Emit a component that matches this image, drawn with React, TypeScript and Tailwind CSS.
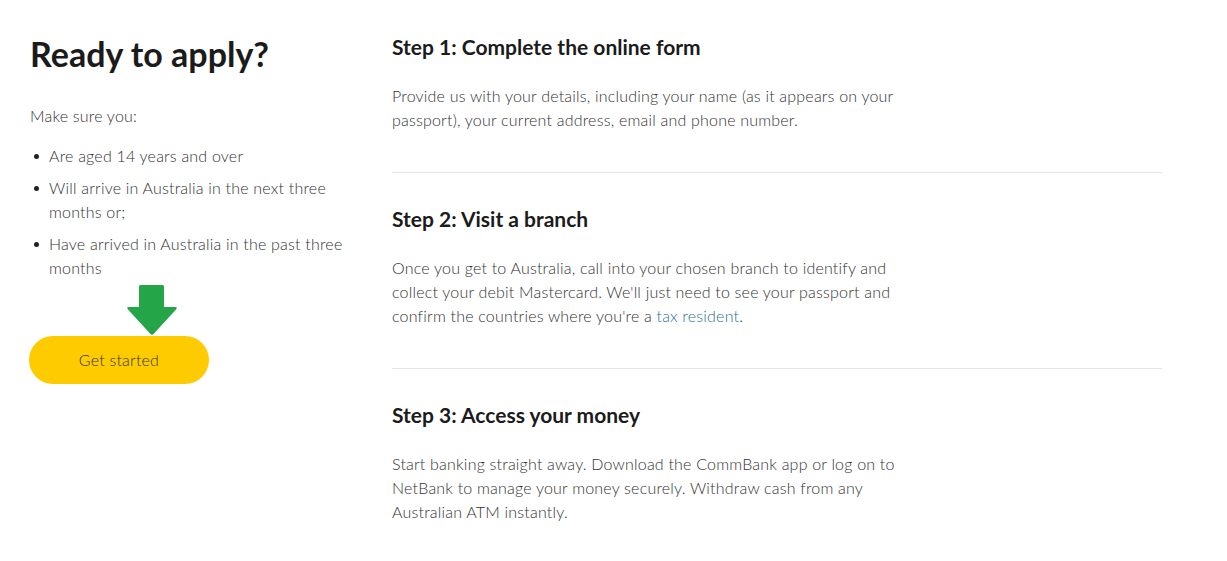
import React from "react";

const font = { fontFamily: "Lato, 'Open Sans', sans-serif" };

function Bullet({ children }: { children: React.ReactNode }) {
  return (
    <li className="flex">
      <span className="w-[19px] shrink-0 flex pt-[10px] pl-[4px]">
        <span className="block w-[5px] h-[5px] rounded-full bg-[#222]" />
      </span>
      <span>{children}</span>
    </li>
  );
}

function Step({ title, children, last }: { title: string; children: React.ReactNode; last?: boolean }) {
  return (
    <div className={last ? "" : "border-b border-[#e6e6e6] pb-[40px] mb-[32px]"}>
      <h3 className="text-[21px] leading-[28px] font-bold text-[#1b1b1b]">{title}</h3>
      <p className="mt-[23px] max-w-[515px] text-[16px] leading-[24px] font-light tracking-[0.2px] text-[#333]">{children}</p>
    </div>
  );
}

export default function App() {
  return (
    <div className="w-[1227px] h-[561px] bg-white overflow-hidden" style={font}>
      <div className="flex pl-[30px] pt-[33px]">
        <div className="w-[362px] shrink-0 pr-[20px]">
          <h2 className="text-[34px] leading-[42px] font-bold text-[#1b1b1b]">Ready to apply?</h2>
          <p className="mt-[29px] text-[16px] leading-[24px] font-light tracking-[0.2px] text-[#333]">Make sure you:</p>
          <ul className="mt-[16px] flex flex-col gap-[8px] text-[16px] leading-[24px] font-light tracking-[0.2px] text-[#333]">
            <Bullet>Are aged 14 years and over</Bullet>
            <Bullet>Will arrive in Australia in the next three months or;</Bullet>
            <Bullet>Have arrived in Australia in the past three months</Bullet>
          </ul>
          <div className="mt-[5px] ml-[96px] h-[51px] w-[52px]">
            <svg width="52" height="51" viewBox="0 0 52 51">
              <path
                d="M13 1.5 Q13 0 14.5 0 H36.5 Q38 0 38 1.5 V22 H49 Q52 22 50 24.5 L27.5 49 Q26 50.5 24.5 49 L2 24.5 Q0 22 3 22 H13 Z"
                fill="#23a548"
              />
            </svg>
          </div>
          <button className="-ml-[1px] w-[180px] h-[48px] rounded-full bg-[#fdcb00] text-[#3a3300] text-[16px] font-light tracking-[0.2px]">
            Get started
          </button>
        </div>
        <div className="w-[770px]">
          <Step title="Step 1: Complete the online form">
            Provide us with your details, including your name (as it appears on your passport), your current address, email and phone number.
          </Step>
          <Step title="Step 2: Visit a branch">
            Once you get to Australia, call into your chosen branch to identify and collect your debit Mastercard. We'll just need to see your passport and confirm the countries where you're a{" "}
            <span className="text-[#2a6f97]">tax resident</span>.
          </Step>
          <Step title="Step 3: Access your money" last>
            Start banking straight away. Download the CommBank app or log on to NetBank to manage your money securely. Withdraw cash from any Australian ATM instantly.
          </Step>
        </div>
      </div>
    </div>
  );
}
